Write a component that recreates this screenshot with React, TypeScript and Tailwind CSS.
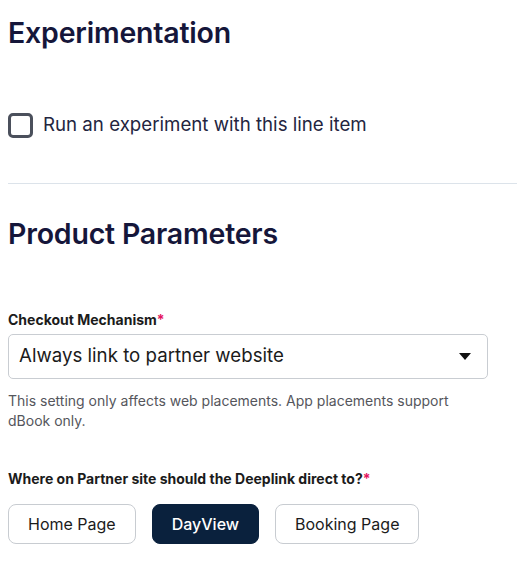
import { useState } from "react";

const options = ["Home Page", "DayView", "Booking Page"];

export default function App() {
  const [checked, setChecked] = useState(false);
  const [target, setTarget] = useState("DayView");

  return (
    <div className="w-[517px] bg-white pl-2 pt-[14px] font-['Inter',sans-serif] text-[#15163a]">
      <h2 className="text-[28.5px] font-semibold leading-[38px] tracking-[-0.2px]">Experimentation</h2>

      <label className="mt-[60px] flex cursor-pointer items-center gap-[10px]">
        <span
          onClick={() => setChecked(!checked)}
          className="flex h-[25px] w-[25px] items-center justify-center rounded-[5px] border-[3px] border-[#4b505c]"
        >
          {checked && <span className="h-[11px] w-[11px] rounded-sm bg-[#4b505c]" />}
        </span>
        <span className="text-[18.7px] leading-[26px] text-[#24253f]">Run an experiment with this line item</span>
      </label>

      <div className="mt-[45px] h-px bg-[#dce3ea]" />

      <h2 className="mt-[31px] text-[28.5px] font-semibold leading-[38px] tracking-[-0.2px]">Product Parameters</h2>

      <div className="mt-[57px] text-[14px] font-bold leading-[20px] text-[#1b1b1b]">
        Checkout Mechanism<span className="text-[#e4155f]">*</span>
      </div>
      <div className="mt-[4px] flex h-[45px] w-[480px] items-center justify-between rounded-[5px] border border-[#c9cdd2] pl-[10px] pr-[16px]">
        <span className="text-[18.7px] text-[#1b1b1b]">Always link to partner website</span>
        <svg width="12" height="7" viewBox="0 0 12 7">
          <path d="M0 0h12L6 7z" fill="#111" />
        </svg>
      </div>
      <p className="mt-[12px] w-[460px] text-[14px] leading-[20px] text-[#55565c]">
        This setting only affects web placements. App placements support dBook only.
      </p>

      <div className="mt-[38px] text-[14px] font-bold leading-[20px] text-[#1b1b1b]">
        Where on Partner site should the Deeplink direct to?<span className="text-[#e4155f]">*</span>
      </div>
      <div className="mt-[15px] flex gap-4">
        {options.map((o) => (
          <button
            key={o}
            onClick={() => setTarget(o)}
            className={
              o === target
                ? "h-[40px] rounded-[8px] border border-[#0a213d] bg-[#0a213d] px-[19px] text-[16px] font-medium text-white"
                : "h-[40px] rounded-[8px] border border-[#c8ccd1] bg-white px-[19px] text-[16px] text-[#1b1b1b]"
            }
          >
            {o}
          </button>
        ))}
      </div>
      <div className="h-[34px]" />
    </div>
  );
}
